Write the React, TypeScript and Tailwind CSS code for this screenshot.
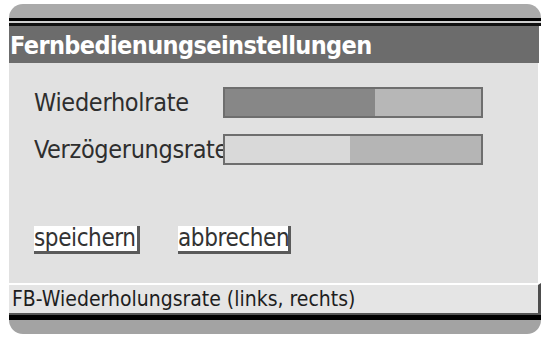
export default function App() {
  const font = { fontFamily: '"DejaVu Sans Condensed", "DejaVu Sans", sans-serif' }
  return (
    <div className="w-[546px] h-[337px] bg-white pt-[4px] pl-[9px]" style={font}>
      <div className="w-[532px] flex flex-col">
        <div className="h-[14px] rounded-t-[14px] bg-[#aaaaaa]" />
        <div className="h-[3px] bg-black" />
        <div className="h-[2px] bg-[#cfcfcf]" />
        <div className="h-[3px] bg-[#111111]" />
        <div className="h-[37px] w-[530px] bg-[#6c6c6c] flex items-center px-[1px] pt-[1px]">
          <span className="text-white text-[25px] font-semibold tracking-[-0.6px] leading-none">
            Fernbedienungseinstellungen
          </span>
        </div>
        <div className="h-[220px] w-[529px] bg-[#e1e1e1] flex flex-col pl-[25px] pt-[24px]">
          <div className="flex items-center h-[31px]">
            <span className="w-[189px] text-[25px] text-[#2e2e2e] leading-none tracking-[-0.3px]">Wiederholrate</span>
            <div className="w-[260px] h-[31px] border-2 border-[#6e6e6e] flex">
              <div className="w-[150px] bg-[#878787]" />
              <div className="flex-1 bg-[#b7b7b7]" />
            </div>
          </div>
          <div className="flex items-center h-[31px] mt-[16px]">
            <span className="w-[189px] text-[25px] text-[#2e2e2e] leading-none tracking-[-0.35px] whitespace-nowrap">
              Verzögerungsrate
            </span>
            <div className="w-[260px] h-[31px] border-2 border-[#6e6e6e] flex">
              <div className="w-[125px] bg-[#d9d9d9]" />
              <div className="flex-1 bg-[#b5b5b5]" />
            </div>
          </div>
          <div className="flex mt-[61px] gap-[38px]">
            <div className="h-[28px] w-[106px] bg-white border-r-[3px] border-b-[3px] border-[#5a5a5a] flex items-end">
              <span className="text-[24px] text-[#333333] leading-none tracking-[-0.4px] pb-[1px]">speichern</span>
            </div>
            <div className="h-[28px] w-[113px] bg-white border-r-[3px] border-b-[3px] border-[#5a5a5a] flex items-end">
              <span className="text-[24px] text-[#333333] leading-none tracking-[-0.4px] pb-[1px]">abbrechen</span>
            </div>
          </div>
        </div>
        <div className="h-[30px] w-[532px] bg-[#e5e5e5] border-t-[2px] border-white border-r-[3px] border-r-[#4d4d4d] flex items-center pl-[3px]">
          <span className="text-[21px] text-[#1e1e1e] leading-none">FB-Wiederholungsrate (links, rechts)</span>
        </div>
        <div className="h-[2px] bg-[#555555]" />
        <div className="h-[5px] bg-black" />
        <div className="h-[14px] rounded-b-[14px] bg-[#a3a3a3]" />
      </div>
    </div>
  )
}
